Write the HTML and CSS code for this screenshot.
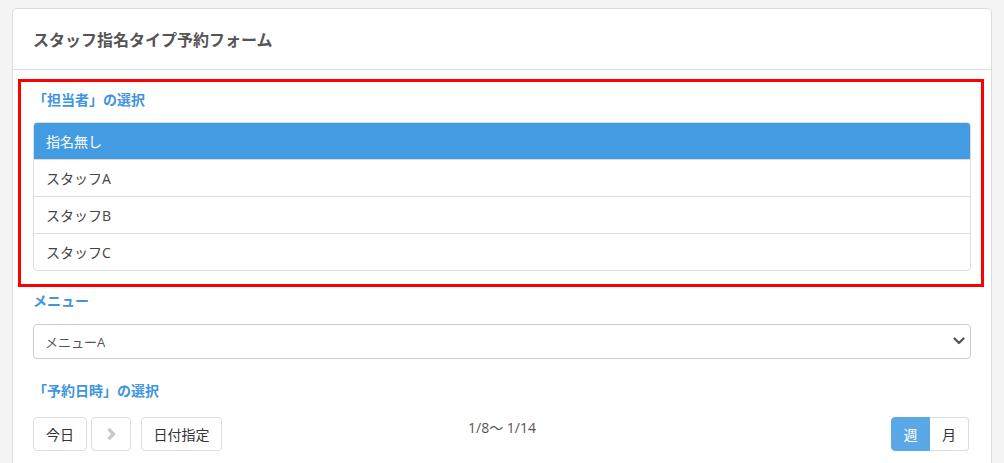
FILE: index.html
```html
<!DOCTYPE html>
<html lang="ja">
<head>
<meta charset="utf-8">
<title>スタッフ指名タイプ予約フォーム</title>
<link rel="stylesheet" href="styles.css">
</head>
<body>
<div class="card">
  <div class="card-header">スタッフ指名タイプ予約フォーム</div>
  <div class="card-body">
    <div class="highlight">
      <div class="label">「担当者」の選択</div>
      <div class="list-group">
        <div class="list-item active">指名無し</div>
        <div class="list-item">スタッフA</div>
        <div class="list-item">スタッフB</div>
        <div class="list-item">スタッフC</div>
      </div>
    </div>
    <div class="label label-menu">メニュー</div>
    <div class="select">
      <span>メニューA</span>
      <svg class="chev" width="12" height="8" viewBox="0 0 12 8"><path d="M1.5 1.5 L6 6 L10.5 1.5" fill="none" stroke="#555" stroke-width="2.2" stroke-linecap="round" stroke-linejoin="round"/></svg>
    </div>
    <div class="label label-date">「予約日時」の選択</div>
    <div class="toolbar">
      <div class="btn-group-left">
        <div class="btn btn-today">今日</div>
        <div class="btn btn-next"><svg width="10" height="14" viewBox="0 0 10 14"><path d="M2.5 2 L7.5 7 L2.5 12" fill="none" stroke="#c8c8c8" stroke-width="3.2" stroke-linejoin="miter"/></svg></div>
        <div class="btn btn-date">日付指定</div>
      </div>
      <div class="range">1/8〜 1/14</div>
      <div class="btn-group-right">
        <div class="seg seg-active">週</div>
        <div class="seg">月</div>
      </div>
    </div>
  </div>
</div>
</body>
</html>
```
FILE: styles.css
```css
* { box-sizing: border-box; }
html, body { margin: 0; padding: 0; }
body {
  background: #f4f4f4;
  font-family: "Open Sans", "Noto Sans CJK JP", sans-serif;
  color: #333;
  height: 463px;
  overflow: hidden;
}
.card {
  margin: 8px 12px 0 12px;
  width: 980px;
  background: #fff;
  border: 1px solid #dddddd;
  border-radius: 5px;
  min-height: 470px;
}
.card-header {
  height: 61px;
  border-bottom: 1px solid #dddddd;
  display: flex;
  align-items: center;
  padding: 0 20px 1px 20px;
  font-size: 16px;
  font-weight: bold;
  color: #555;
}
.card-body {
  padding: 9px 20px 0 20px;
}
.highlight {
  margin: 0 -13px 4px -15px;
  border: 3px solid #ff0000;
  padding: 8px 10px 13px 12px;
}
.label {
  font-size: 14px;
  font-weight: bold;
  color: #3f95de;
  line-height: 19px;
  height: 20px;
  margin-bottom: 12px;
}
.label-menu { margin-bottom: 13px; }
.label-date { margin-top: 22px; margin-bottom: 16px; }
.list-group {
  border: 1px solid #dddddd;
  border-radius: 4px;
  overflow: hidden;
}
.list-item {
  height: 37px;
  padding: 0 12px 1px 12px;
  display: flex;
  align-items: center;
  font-size: 14px;
  color: #444;
  border-top: 1px solid #dddddd;
}
.list-item:first-child { border-top: none; height: 36px; }
.list-item.active {
  background: #439ce2;
  color: #fff;
}
.select {
  height: 35px;
  border: 1px solid #cccccc;
  border-radius: 4px;
  display: flex;
  align-items: center;
  justify-content: space-between;
  padding: 0 5px 1px 11px;
  font-size: 13px;
  color: #555;
}
.toolbar {
  display: grid;
  grid-template-columns: 1fr auto 1fr;
  align-items: start;
}
.btn-group-left {
  display: flex;
}
.btn {
  height: 34px;
  border: 1px solid #dddddd;
  border-radius: 4px;
  display: flex;
  align-items: center;
  justify-content: center;
  font-size: 14px;
  color: #333;
  background: #fff;
}
.btn-today { width: 54px; }
.btn-next { width: 40px; margin-left: 4px; }
.btn-date { width: 81px; margin-left: 10px; }
.range {
  font-size: 14px;
  color: #555;
  line-height: 21px;
}
.btn-group-right {
  display: flex;
  justify-content: flex-end;
  padding-right: 2px;
}
.seg {
  width: 39px;
  height: 34px;
  border: 1px solid #dddddd;
  display: flex;
  align-items: center;
  justify-content: center;
  font-size: 14px;
  color: #333;
  background: #fff;
}
.seg:first-child { border-radius: 4px 0 0 4px; }
.seg:last-child { border-radius: 0 4px 4px 0; border-left: none; }
.seg-active {
  background: #5aa9e6;
  border-color: #5aa9e6;
  color: #fff;
}
```
